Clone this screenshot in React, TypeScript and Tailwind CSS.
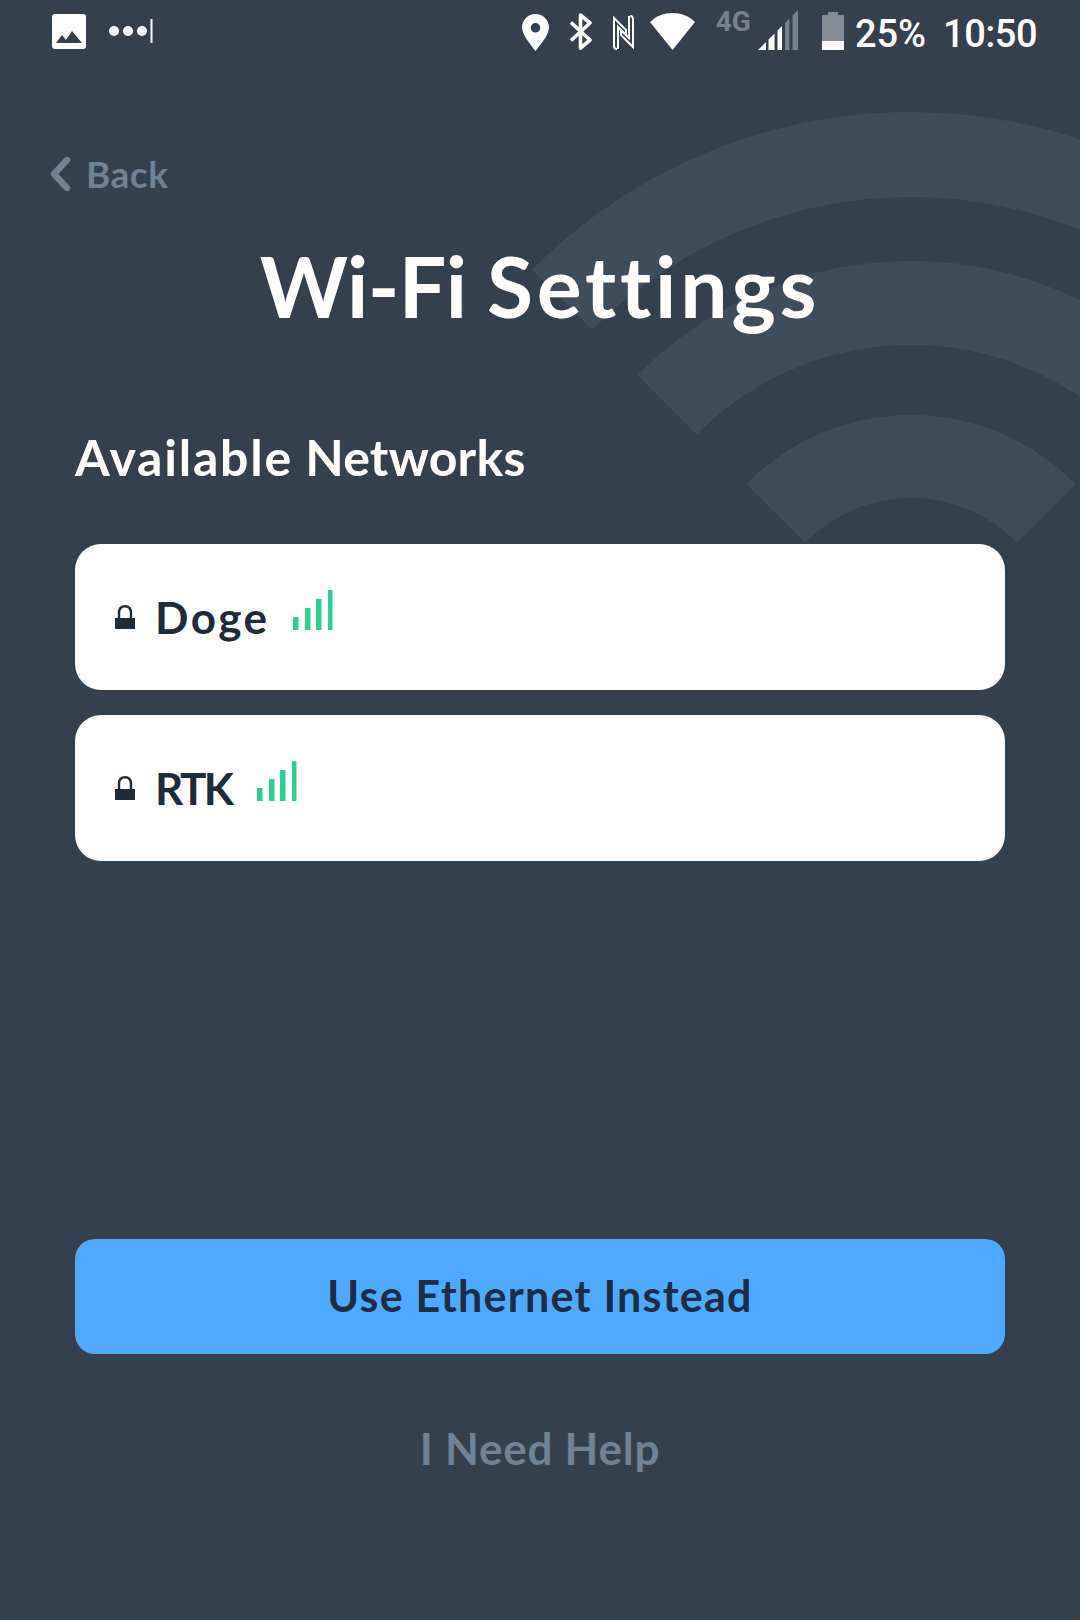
import React from 'react';

function PictureIcon() {
  return (
    <svg width="34" height="35" viewBox="0 0 34 35" className="mt-[14px]">
      <rect x="0" y="0" width="34" height="35" rx="3" fill="#fff" />
      <path d="M4 29 L10 21 L14 26 L20 17 L30 29 Z" fill="#34404e" />
    </svg>
  );
}

function DotsIcon() {
  return (
    <svg width="46" height="26" viewBox="0 0 46 26" className="mt-[18px] ml-[22px]">
      <circle cx="6" cy="13" r="5" fill="#fff" />
      <circle cx="20" cy="13" r="5" fill="#fff" />
      <circle cx="34" cy="13" r="5" fill="#fff" />
      <rect x="42.5" y="1" width="2" height="24" fill="#fff" />
    </svg>
  );
}

function PinIcon() {
  return (
    <svg width="27" height="37" viewBox="0 0 27 37" className="mt-[14px]">
      <path
        fillRule="evenodd"
        d="M13.5 0 C21 0 27 6 27 13.5 C27 20 20 29 13.5 37 C7 29 0 20 0 13.5 C0 6 6 0 13.5 0 Z M13.5 9 A4.8 4.8 0 1 0 13.5 18.6 A4.8 4.8 0 1 0 13.5 9 Z"
        fill="#fff"
      />
    </svg>
  );
}

function BluetoothIcon() {
  return (
    <svg width="24" height="37" viewBox="0 0 24 37" fill="none" className="mt-[13px] ml-[20px]">
      <path d="M2 9.5 L21 27 L11.5 35 L11.5 2 L21 10 L2 27.5" stroke="#fff" strokeWidth="3.6" strokeLinejoin="round" />
    </svg>
  );
}

function NfcIcon() {
  return (
    <svg width="21" height="35" viewBox="0 0 21 35" fill="none" className="mt-[15px] ml-[20px]">
      <path d="M4 34 C2 34 1 33 1 31 L1 3 L13 15 L13 20 L5 12 L5 34" stroke="#fff" strokeWidth="2" />
      <path d="M17 1 C19 1 20 2 20 4 L20 32 L8 20 L8 15 L16 23 L16 1" stroke="#fff" strokeWidth="2" />
    </svg>
  );
}

function WifiWedge() {
  return (
    <svg width="45" height="37" viewBox="0 0 45 37" className="mt-[13px] ml-[16px]">
      <path d="M0 9 C12 -3 33 -3 45 9 L22.5 37 Z" fill="#fff" />
    </svg>
  );
}

function SignalIcon() {
  return (
    <svg width="40" height="40" viewBox="0 0 40 40" className="mt-[10px] ml-[7px]">
      <path d="M0 40 L8 32 L8 40 Z M10.5 40 L10.5 29.5 L16.5 23.5 L16.5 40 Z M19.5 40 L19.5 20.5 L24 16 L24 40 Z" fill="#fff" />
      <path d="M27 40 L27 13 L31.5 8.5 L31.5 40 Z M34.5 40 L34.5 5.5 L40 0 L40 40 Z" fill="#77828e" />
    </svg>
  );
}

function BatteryIcon() {
  return (
    <svg width="22" height="38" viewBox="0 0 22 38" className="mt-[12px] ml-[24px]">
      <path d="M6 0 H16 V3 H21 A1 1 0 0 1 22 4 V29 H0 V4 A1 1 0 0 1 1 3 H6 Z" fill="#858d97" />
      <path d="M0 29 H22 V37 A1 1 0 0 1 21 38 H1 A1 1 0 0 1 0 37 Z" fill="#fff" />
    </svg>
  );
}

function LockIcon() {
  return (
    <svg width="20" height="24" viewBox="0 0 20 24" fill="none">
      <path d="M4 15 V8 C4 3.5 6 1.2 10 1.2 C14 1.2 16 3.5 16 8 V15" stroke="#202b3a" strokeWidth="2.4" />
      <rect x="0" y="13" width="20" height="11" fill="#202b3a" />
    </svg>
  );
}

function BarsIcon() {
  return (
    <svg width="40" height="40" viewBox="0 0 40 40">
      <rect x="0" y="27" width="5.5" height="13" fill="#2bd08f" />
      <rect x="12" y="18" width="5.5" height="22" fill="#2bd08f" />
      <rect x="23" y="9" width="5.5" height="31" fill="#2bd08f" />
      <rect x="35" y="0" width="4.5" height="40" fill="#2bd08f" />
    </svg>
  );
}

// big faint wifi sign behind the title
function WifiBackdrop() {
  const arc = (outer: number, inner: number) => {
    const a = outer * Math.SQRT1_2;
    const b = inner * Math.SQRT1_2;
    return `M${911 - a} ${646 - a} A${outer} ${outer} 0 0 1 ${911 + a} ${646 - a} L${911 + b} ${646 - b} A${inner} ${inner} 0 0 0 ${911 - b} ${646 - b} Z`;
  };
  return (
    <svg className="absolute top-0 left-0 pointer-events-none" width="1080" height="700" viewBox="0 0 1080 700">
      <g fill="#3f4c5c" stroke="#3f4c5c" strokeWidth="4" strokeLinejoin="round">
        <path d={arc(532, 451)} />
        <path d={arc(383, 303)} />
        <path d={arc(229, 150)} />
      </g>
    </svg>
  );
}

const networks = [
  { name: 'Doge', textClass: 'w-[110px] tracking-[2.5px]', gap: 'ml-[28px]' },
  { name: 'RTK', textClass: 'w-[76px] tracking-[-2.5px]', gap: 'ml-[26px]' },
];

export default function App() {
  return (
    <div className="relative w-[1080px] h-[1620px] overflow-hidden bg-[#34404e] font-['Lato',sans-serif] [font-variant-ligatures:none]">
      <WifiBackdrop />

      <div className="relative">
        {/* Status bar */}
        <div className="flex h-[60px] pl-[52px] pr-[43px]">
          <PictureIcon />
          <DotsIcon />
          <div className="ml-auto flex">
            <PinIcon />
            <BluetoothIcon />
            <NfcIcon />
            <WifiWedge />
            <span className="ml-[21px] mt-[10px] h-[24px] text-[28px] leading-[24px] font-bold text-[#77828e] font-['Roboto',sans-serif]">4G</span>
            <SignalIcon />
            <BatteryIcon />
            <span className="ml-[11px] mt-[15px] text-[38px] leading-[38px] font-medium text-white font-['Roboto',sans-serif]">25%</span>
            <span className="ml-[17px] mt-[15px] text-[38px] leading-[38px] font-medium tracking-[-0.5px] text-white font-['Roboto',sans-serif]">10:50</span>
          </div>
        </div>

        {/* Back */}
        <div className="flex items-center h-[40px] mt-[94px] pl-[49px]">
          <svg width="22" height="34" viewBox="0 0 22 34" fill="none">
            <path d="M18 3 L5 17 L18 31" stroke="#6f8296" strokeWidth="6.5" strokeLinecap="round" strokeLinejoin="round" />
          </svg>
          <span className="ml-[15px] text-[37px] leading-[40px] font-bold tracking-[0.5px] text-[#6f8296]">Back</span>
        </div>

        <h1 className="mt-[42px] text-center text-[84px] leading-[100px] font-bold text-white">
          <span className="tracking-[-0.5px]">Wi-Fi</span> <span className="tracking-[3.8px]">Settings</span>
        </h1>

        <div className="px-[75px]">
          <h2 className="mt-[91px] text-[50px] leading-[60px] font-bold text-white">
            <span className="tracking-[1.8px]">Available</span> <span className="tracking-[0.25px]">Networks</span>
          </h2>

          <div className="mt-[57px] flex flex-col gap-[25px]">
            {networks.map((n) => (
              <div key={n.name} className="flex items-center h-[146px] rounded-[26px] bg-white pl-[40px]">
                <LockIcon />
                <span className={`ml-[20px] text-[44px] leading-[50px] font-bold text-[#202b3a] ${n.textClass}`}>{n.name}</span>
                <div className={`${n.gap} -mt-[14px]`}>
                  <BarsIcon />
                </div>
              </div>
            ))}
          </div>

          <button className="mt-[378px] flex items-center justify-center w-full h-[115px] rounded-[20px] bg-[#4faaff] text-[43px] font-bold tracking-[1.25px] text-[#1f2d42]">
            Use Ethernet Instead
          </button>

          <div className="mt-[69px] text-center text-[44px] leading-[50px] font-bold tracking-[0.75px] text-[#6f8296]">I Need Help</div>
        </div>
      </div>
    </div>
  );
}
